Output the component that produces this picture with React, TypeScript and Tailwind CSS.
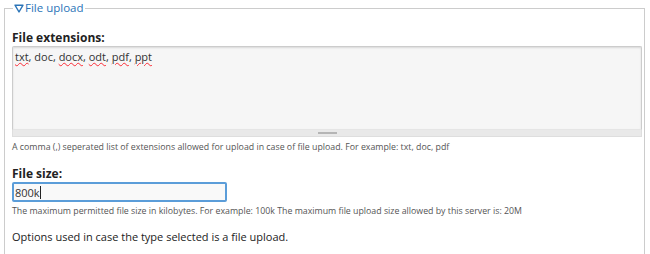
import React from 'react';

const Squiggle: React.FC<{ children: React.ReactNode }> = ({ children }) => (
  <span className="underline decoration-wavy decoration-red-500 decoration-1 underline-offset-[1px]">
    {children}
  </span>
);

const App: React.FC = () => {
  return (
    <div className="w-[650px] h-[254px] overflow-hidden bg-white pt-[1px] font-['Open_Sans',sans-serif] text-[#333]">
      <fieldset className="ml-[4px] mr-[5px] border border-[#ccc] border-b-0 pl-[7px] pr-[2px] pt-[15px] pb-4 min-w-0">
        <legend className="ml-[1px] px-[1px] text-[11.5px] leading-[14px] text-[#2a74b8] flex items-center">
          <svg width="10" height="9" viewBox="0 0 10 9" className="mr-[1px]">
            <path d="M1 1.2 H9 L5 8 Z" fill="none" stroke="#2a74b8" strokeWidth="1.4" strokeLinejoin="round" />
          </svg>
          File upload
        </legend>

        <div>
          <label className="block text-[12px] font-bold leading-[16px] text-[#222]">
            File extensions:
          </label>
          <div className="w-[630px] h-[84px] border border-[#ccc] border-b-[#e5e5e5] rounded-t-[2px] bg-[#f6f6f6] shadow-[inset_0_1px_2px_rgba(0,0,0,0.12)] px-[2px] pt-[2px] text-[11px] leading-[15px] text-[#333]">
            <Squiggle>txt</Squiggle>, doc, <Squiggle>docx</Squiggle>, <Squiggle>odt</Squiggle>, <Squiggle>pdf</Squiggle>, <Squiggle>ppt</Squiggle>
          </div>
          <div className="w-[630px] h-[7px] bg-[#e9e9e9] border border-t-0 border-[#dedede] flex items-center justify-center">
            <div className="w-[19px] h-[2px] bg-[#b5b5b5]" />
          </div>
          <p className="mt-[4px] text-[8.8px] leading-[12px] text-[#555]">
            A comma (,) seperated list of extensions allowed for upload in case of file upload. For example: txt, doc, pdf
          </p>
        </div>

        <div className="mt-[13px]">
          <label className="block text-[12px] font-bold leading-[16px] text-[#222]">
            File size:
          </label>
          <div className="w-[215px] h-[20px] border-2 border-[#5b9dd9] rounded-[2px] bg-[#f9f9f9] px-[1px] text-[11px] leading-[15px] text-[#333] flex items-center">
            800k<span className="inline-block w-px h-[13px] bg-[#222]" />
          </div>
          <p className="mt-[3px] text-[8.8px] leading-[12px] text-[#555]">
            The maximum permitted file size in kilobytes. For example: 100k The maximum file upload size allowed by this server is: 20M
          </p>
        </div>

        <p className="mt-[11px] text-[11px] leading-[18px] text-[#222]">
          Options used in case the type selected is a file upload.
        </p>
      </fieldset>
    </div>
  );
};

export default App;
